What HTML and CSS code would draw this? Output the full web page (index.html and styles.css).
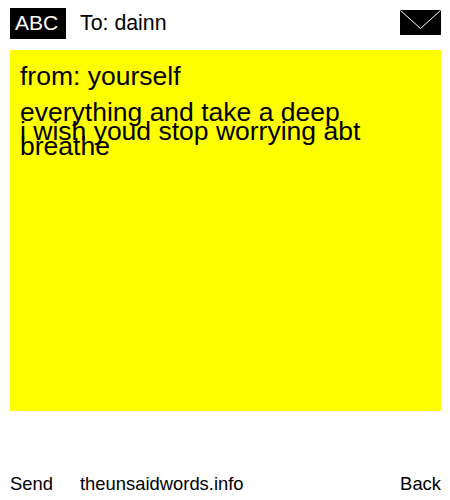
FILE: index.html
```html
<!DOCTYPE html>
<html lang="en">
<head>
<meta charset="utf-8">
<title>The Unsaid Words</title>
<link rel="stylesheet" href="styles.css">
</head>
<body>
<div class="page">
  <header class="top">
    <div class="abc">ABC</div>
    <div class="to">To: dainn</div>
    <svg class="env" width="41" height="25" viewBox="0 0 41 25" aria-hidden="true">
      <rect width="41" height="25" fill="#000"/>
      <path d="M0.5 0.5 L20.5 18.5 L40.5 0.5" fill="none" stroke="#fff" stroke-width="1"/>
    </svg>
  </header>
  <main class="note">
    <div class="from">from: yourself</div>
    <div class="stack">
      <div class="msg-a">everything and take a deep<br>breathe</div>
      <div class="msg-b">i wish youd stop worrying abt</div>
    </div>
  </main>
  <footer class="bottom">
    <span class="send">Send</span>
    <span class="site">theunsaidwords.info</span>
    <span class="back">Back</span>
  </footer>
</div>
</body>
</html>
```
FILE: styles.css
```css
html, body { margin: 0; padding: 0; background: #fff; }
body { font-family: "Liberation Sans", Arial, sans-serif; color: #000; }
.page { width: 431px; height: 500px; margin-left: 10px; display: flex; flex-direction: column; }
.top { display: flex; align-items: center; height: 31px; margin-top: 8px; }
.abc { width: 56px; height: 31px; box-sizing: border-box; padding-left: 5px; background: #000; color: #fff; font-size: 21px; line-height: 30px; }
.to { margin-left: 14px; font-size: 21.33px; line-height: 31px; flex: 1; }
.env { display: block; margin-top: -2px; }
.note { margin-top: 11px; height: 361px; background: #ff0; padding: 10px; box-sizing: border-box; font-size: 26.5px; }
.from { line-height: 32px; }
.stack { display: grid; margin-top: 3px; }
.msg-a, .msg-b { grid-area: 1 / 1; }
.msg-a { line-height: 34px; }
.msg-b { line-height: 32px; margin-top: 20px; }
.bottom { display: flex; margin-top: 61px; font-size: 18.4px; line-height: 24px; }
.send { width: 70px; }
.site { flex: 1; }
```
